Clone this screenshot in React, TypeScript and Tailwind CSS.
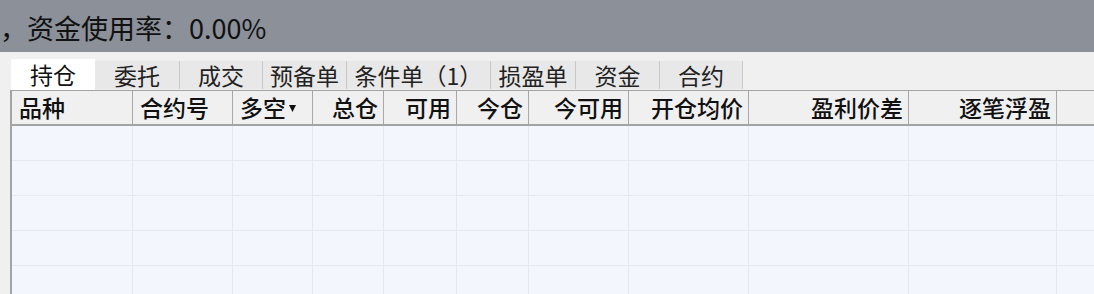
const tabs = [
  { label: "持仓", w: "w-[84px]" },
  { label: "委托", w: "w-[85px]" },
  { label: "成交", w: "w-[83px]" },
  { label: "预备单", w: "w-[84px]" },
  { label: "条件单（1）", w: "w-[144px]" },
  { label: "损盈单", w: "w-[85px]" },
  { label: "资金", w: "w-[84px]" },
  { label: "合约", w: "w-[83px]" },
];

const columns = [
  { label: "品种", w: "w-[121px]", align: "left" },
  { label: "合约号", w: "w-[100px]", align: "left" },
  { label: "多空", w: "w-[80px]", align: "left", sort: true },
  { label: "总仓", w: "w-[71px]", align: "right" },
  { label: "可用", w: "w-[73px]", align: "right" },
  { label: "今仓", w: "w-[72px]", align: "right" },
  { label: "今可用", w: "w-[100px]", align: "right" },
  { label: "开仓均价", w: "w-[120px]", align: "right" },
  { label: "盈利价差", w: "w-[160px]", align: "right" },
  { label: "逐笔浮盈", w: "w-[148px]", align: "right" },
];

const rows = [0, 1, 2, 3, 4];

export default function App() {
  return (
    <div
      className="w-[1094px] h-[294px] overflow-hidden bg-[#f0f0f0] text-[#111]"
      style={{ fontFamily: '"Noto Sans CJK SC", "Noto Sans", sans-serif' }}
    >
      <div className="h-[52px] bg-[#8b9099] flex items-center text-[27px] leading-none whitespace-nowrap">
        <span className="pt-[2px]">，资金使用率：0.00%</span>
      </div>

      <div className="h-[38px] pl-[11px] flex items-end">
        {tabs.map((t, i) => (
          <div
            key={t.label}
            className={
              i === 0
                ? `${t.w} h-[31px] bg-white flex items-center justify-center text-[23px] leading-none`
                : `${t.w} h-[28px] mb-[1px] bg-[#e8e8e8] border-r border-[#c9c9c9] flex items-center justify-center text-[23px] leading-none text-[#222]`
            }
          >
            {t.label}
          </div>
        ))}
      </div>

      <div className="ml-[10px] border-l-2 border-t border-[#a3a3a3]">
        <div className="h-[35px] flex border-b-2 border-[#a3a3a3] bg-[#f0f0f0]">
          {columns.map((c) => (
            <div
              key={c.label}
              className={`${c.w} shrink-0 border-r border-[#a8a8a8] flex items-center text-[23px] font-medium leading-none whitespace-nowrap ${
                c.align === "left" ? "justify-start pl-[7px]" : "justify-end pr-[5px]"
              }`}
            >
              <span>{c.label}</span>
              {c.sort && (
                <svg width="7" height="7" viewBox="0 0 7 7" className="ml-[3px] mt-[1px]">
                  <path d="M0 0H7L3.5 7Z" fill="#111" />
                </svg>
              )}
            </div>
          ))}
          <div className="flex-1" />
        </div>

        {rows.map((r) => (
          <div key={r} className="h-[35px] flex bg-[#f3f7fd] border-b border-[#e6e9ee]">
            {columns.map((c) => (
              <div key={c.label} className={`${c.w} shrink-0 border-r border-[#e6e9ee]`} />
            ))}
            <div className="flex-1" />
          </div>
        ))}
      </div>
    </div>
  );
}
